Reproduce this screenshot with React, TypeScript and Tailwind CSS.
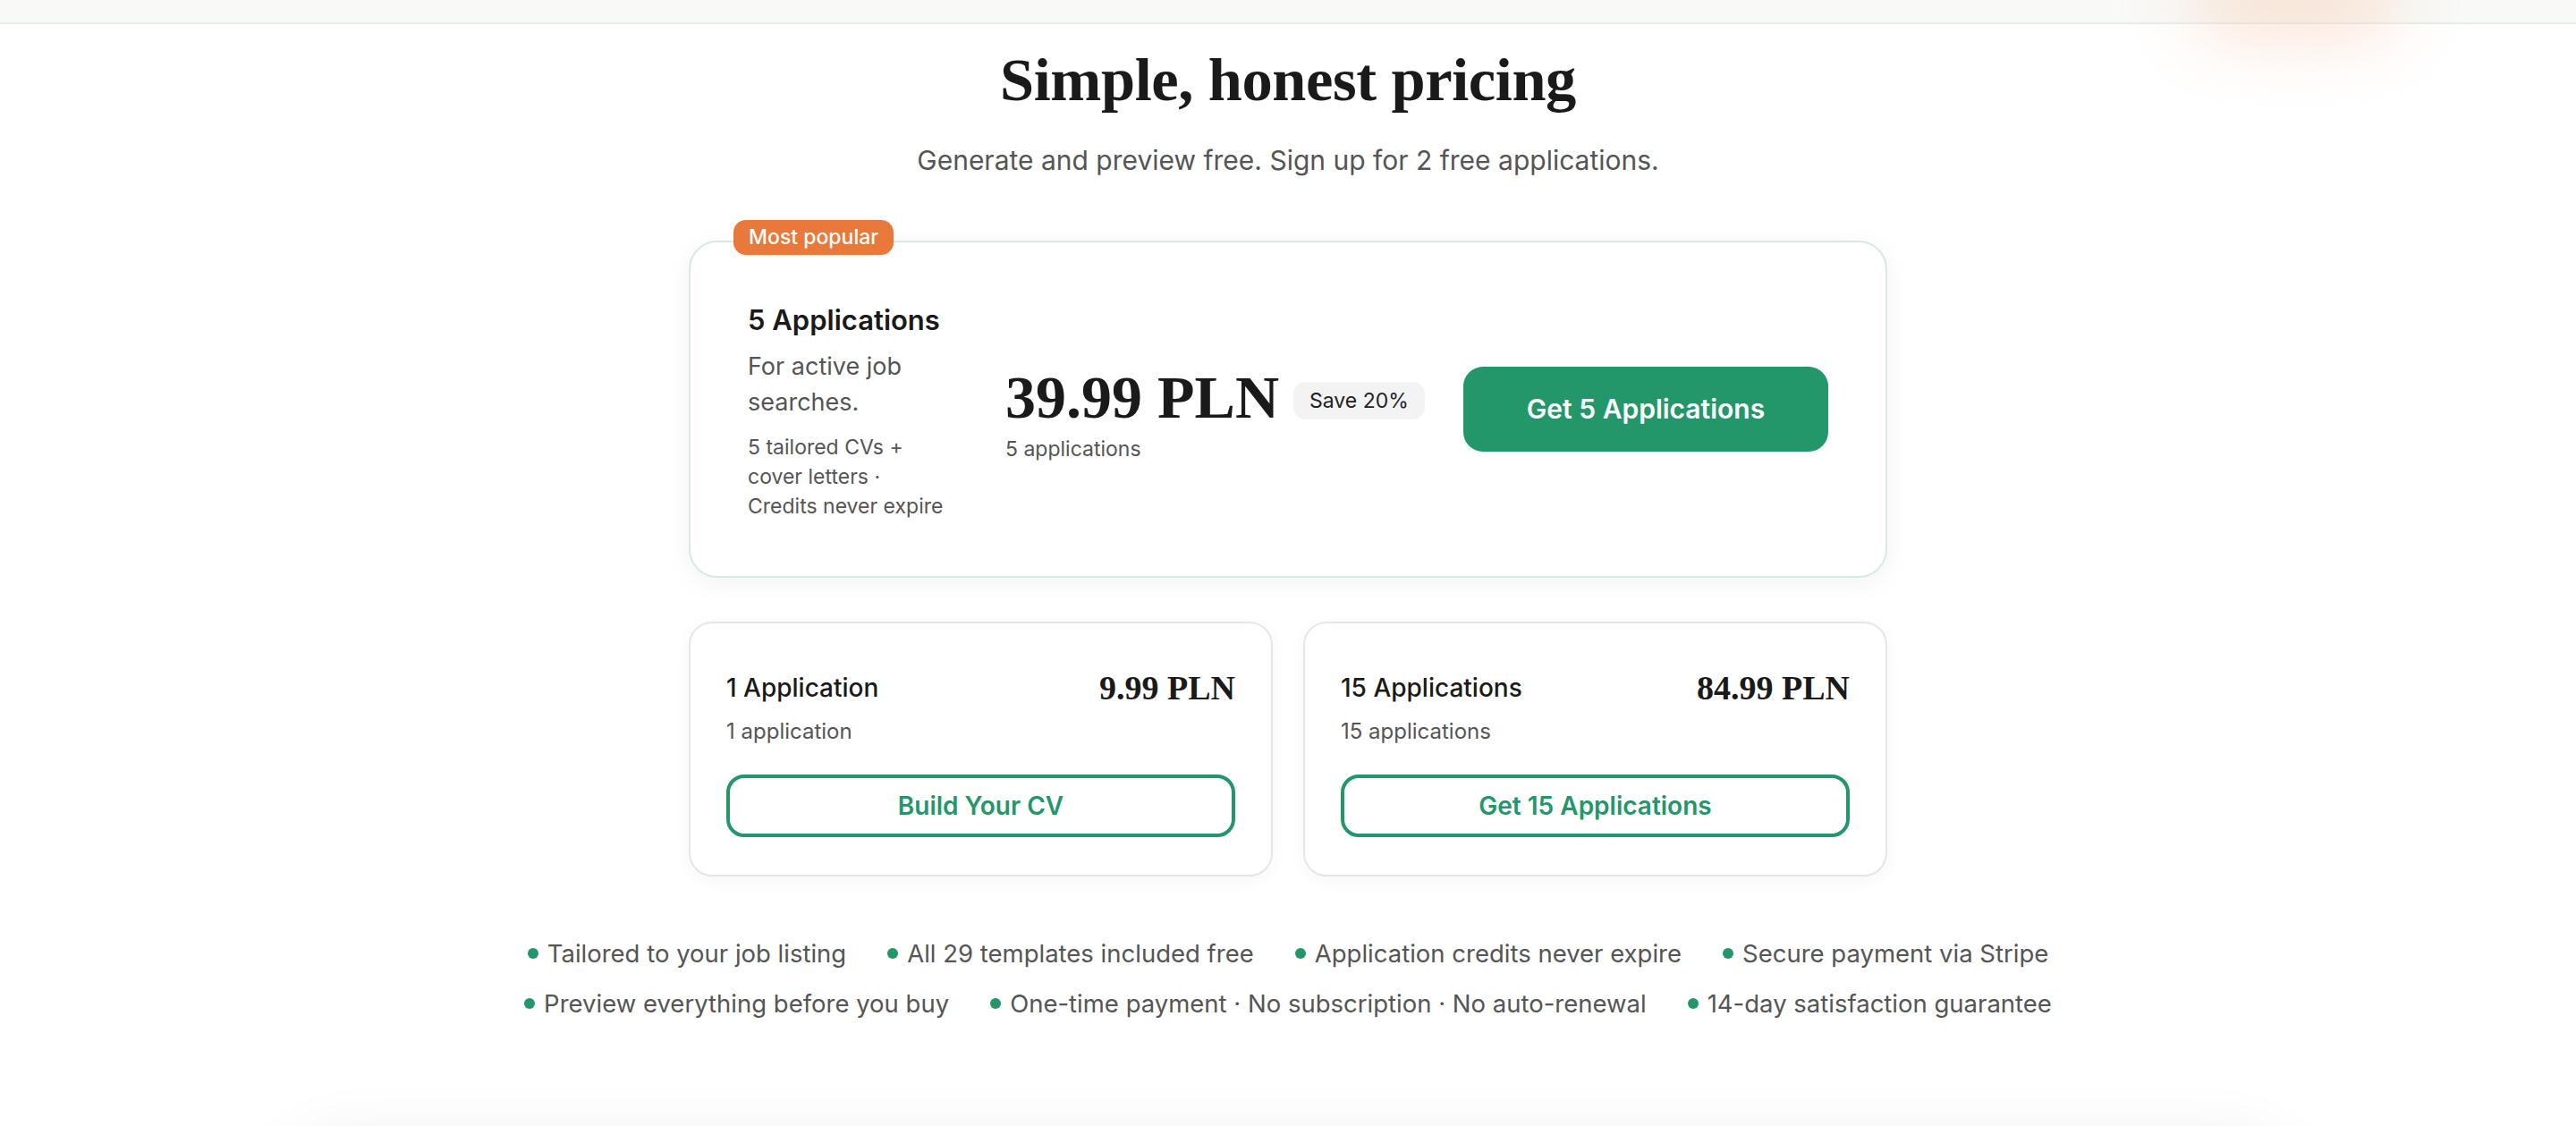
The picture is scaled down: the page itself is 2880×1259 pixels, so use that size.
import React from 'react';

const serif = { fontFamily: '"Liberation Serif", "DejaVu Serif", serif' };

const smallPlans = [
  { name: '1 Application', price: '9.99 PLN', sub: '1 application', cta: 'Build Your CV' },
  { name: '15 Applications', price: '84.99 PLN', sub: '15 applications', cta: 'Get 15 Applications' },
];

const featureRows = [
  ['Tailored to your job listing', 'All 29 templates included free', 'Application credits never expire', 'Secure payment via Stripe'],
  ['Preview everything before you buy', 'One-time payment · No subscription · No auto-renewal', '14-day satisfaction guarantee'],
];

const App: React.FC = () => {
  return (
    <div className="relative min-h-screen overflow-hidden bg-white font-['Inter',sans-serif] text-[#1a1a1a]">
      {/* sticky header, scrolled */}
      <div className="relative h-[27px] border-b-2 border-[#e4efe8] bg-[#f9f9f7]">
        <div className="absolute left-[2450px] top-[-40px] h-[80px] w-[230px] rounded-full bg-[#f6c6a8] opacity-50 blur-2xl" />
      </div>

      <main className="flex flex-col items-center">
        <h2 className="mt-[28px] text-[68.5px] font-bold leading-[68px] tracking-[-0.4px]" style={serif}>
          Simple, honest pricing
        </h2>
        <p className="mt-[36px] text-[30px] leading-[40px] text-[#555]">
          Generate and preview free. Sign up for 2 free applications.
        </p>

        <div className="mt-[70px] w-[1340px]">
          {/* featured plan */}
          <div className="relative flex h-[377px] items-center rounded-[32px] border-2 border-[#d4ebe2] bg-white px-16 shadow-[0_6px_30px_rgba(0,0,0,0.05)]">
            <span className="absolute left-[48px] top-[-25px] rounded-[14px] bg-[#e8793a] px-[17px] py-[4px] text-[23px] font-medium leading-[31px] text-white">
              Most popular
            </span>

            <div className="w-[229px] pt-[6px]">
              <h3 className="text-[31px] font-semibold leading-[40px]">5 Applications</h3>
              <p className="mt-[12px] text-[27px] leading-[40px] text-[#555]">For active job searches.</p>
              <p className="mt-[14px] text-[23px] leading-[33px] text-[#555]">5 tailored CVs + cover letters · Credits never expire</p>
            </div>

            <div className="ml-[59px] pt-[14px]">
              <div className="flex items-center gap-[16px]">
                <span className="text-[68px] font-bold leading-[64px]" style={serif}>39.99 PLN</span>
                <span className="mt-[8px] rounded-[14px] bg-[#f3f3f3] px-[18px] py-[4px] text-[23px] leading-[34px] text-[#222]">Save 20%</span>
              </div>
              <p className="mt-[10px] text-[23px] leading-[32px] text-[#555]">5 applications</p>
            </div>

            <button className="ml-auto h-[95px] w-[408px] rounded-[22px] bg-[#23976a] text-[30px] font-semibold text-white">
              Get 5 Applications
            </button>
          </div>

          {/* other plans */}
          <div className="mt-[49px] grid grid-cols-2 gap-[34px]">
            {smallPlans.map(p => (
              <div key={p.name} className="rounded-[26px] border-2 border-[#e6e6e6] bg-white px-10 pb-[42px] pt-[44px] shadow-[0_4px_20px_rgba(0,0,0,0.04)]">
                <div className="flex items-center justify-between pt-[8px]">
                  <span className="text-[28px] font-medium leading-[40px]">{p.name}</span>
                  <span className="text-[38px] font-bold leading-[40px]" style={serif}>{p.price}</span>
                </div>
                <p className="mt-[13px] text-[24px] leading-[32px] text-[#555]">{p.sub}</p>
                <button className="mt-[32px] h-[70px] w-full rounded-[20px] border-4 border-[#23976a] text-[28px] font-semibold text-[#23976a]">
                  {p.cta}
                </button>
              </div>
            ))}
          </div>
        </div>

        {/* reassurance list */}
        <div className="mt-[66px] flex flex-col items-center gap-[16px]">
          {featureRows.map((row, i) => (
            <div key={i} className="flex justify-center gap-x-[46px]">
              {row.map(f => (
                <div key={f} className="flex items-center gap-[10px] text-[27.5px] leading-[40px] text-[#555]">
                  <span className="h-[12px] w-[12px] rounded-full bg-[#23976a]" />
                  {f}
                </div>
              ))}
            </div>
          ))}
        </div>

        {/* next section, below the fold */}
        <div className="mt-[140px] h-[400px] w-[2220px] rounded-[40px] bg-white shadow-[0_0_80px_rgba(0,0,0,0.09)]" />
      </main>
    </div>
  );
};

export default App;
